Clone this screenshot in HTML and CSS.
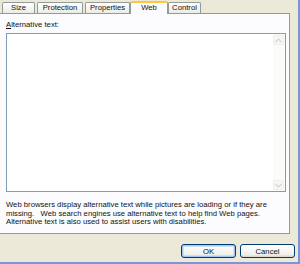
FILE: index.html
```html
<!DOCTYPE html>
<html>
<head>
<meta charset="utf-8">
<link rel="stylesheet" href="styles.css">
</head>
<body>
<div class="dialog">
  <div class="tabstrip">
    <div class="tab t-size">Size</div>
    <div class="tab t-prot">Protection</div>
    <div class="tab t-prop">Properties</div>
    <div class="tab active t-web">Web</div>
    <div class="tab t-ctrl">Control</div>
  </div>
  <div class="panel">
    <div class="label"><span class="acc">A</span>lternative text:</div>
    <div class="textbox">
      <div class="textarea-content"></div>
      <div class="scrollbar">
        <div class="sb-btn"><svg width="7" height="5" viewBox="0 0 7 5"><path d="M0.5 4 L3.5 1 L6.5 4" fill="none" stroke="#d2d5db" stroke-width="1.2"/></svg></div>
        <div class="sb-track"></div>
        <div class="sb-btn"><svg width="7" height="5" viewBox="0 0 7 5"><path d="M0.5 1 L3.5 4 L6.5 1" fill="none" stroke="#d2d5db" stroke-width="1.2"/></svg></div>
      </div>
    </div>
    <p class="help">Web browsers display alternative text while pictures are loading or if they are<br>missing.&nbsp;&nbsp; Web search engines use alternative text to help find Web pages.<br>Alternative text is also used to assist users with disabilities.</p>
  </div>
  <div class="footer">
    <div class="btn default">OK</div>
    <div class="btn">Cancel</div>
  </div>
</div>
</body>
</html>
```
FILE: styles.css
```css
html, body {
  margin: 0;
  padding: 0;
}
body {
  width: 300px;
  height: 264px;
  background: #ECE9D8;
  font-family: "Liberation Sans", Arial, sans-serif;
  font-size: 7.7px;
  color: #111;
  overflow: hidden;
}
.dialog {
  box-sizing: border-box;
  width: 300px;
  height: 264px;
  border-right: 2px solid #7a96d8;
  border-bottom: 2px solid #7a96d8;
  padding-top: 1px;
  display: flex;
  flex-direction: column;
}
.tabstrip {
  display: flex;
  align-items: flex-end;
  height: 12px;
  padding-left: 2px;
  gap: 2px;
  position: relative;
  z-index: 2;
}
.tab {
  box-sizing: border-box;
  height: 11px;
  border: 1px solid #919B9C;
  border-bottom: none;
  border-radius: 2px 2px 0 0;
  background: linear-gradient(#ffffff, #ECEBE6);
  display: flex;
  align-items: center;
  justify-content: center;
  white-space: nowrap;
  line-height: 1;
}
.t-size { width: 33px; }
.t-prot { width: 46px; }
.t-prop { width: 45px; }
.t-web { width: 38px; }
.t-ctrl { width: 33px; }
.tab.active {
  height: 13px;
  margin: 0 -2px -1px -2px;
  border-top: 2px solid #FFC83C;
  background: #FCFCFE;
  padding-bottom: 1px;
}
.panel {
  box-sizing: border-box;
  width: 290px;
  height: 221px;
  border: 1px solid #919B9C;
  border-left: none;
  background: #FCFCFE;
  padding: 5px 0 0 6px;
  display: flex;
  flex-direction: column;
}
.label {
  height: 14px;
  line-height: 12px;
}
.acc {
  text-decoration: underline;
}
.textbox {
  box-sizing: border-box;
  width: 280px;
  height: 159px;
  border: 1px solid #7F9DB9;
  background: #fff;
  display: flex;
}
.textarea-content {
  flex: 1;
}
.scrollbar {
  width: 11px;
  display: flex;
  flex-direction: column;
  background: #FBFBF9;
  padding: 1px 1px 1px 0;
}
.sb-btn {
  box-sizing: border-box;
  height: 10px;
  border: 1px solid #f0efe9;
  border-radius: 1px;
  background: #F7F6F2;
  display: flex;
  align-items: center;
  justify-content: center;
}
.sb-track {
  flex: 1;
}
.help {
  margin: 9px 0 0 0;
  line-height: 8.5px;
  white-space: nowrap;
}
.footer {
  display: flex;
  justify-content: flex-end;
  gap: 4px;
  padding: 10px 3px 0 0;
}
.btn {
  box-sizing: border-box;
  width: 55px;
  height: 14px;
  border: 1px solid #003C74;
  border-radius: 3px;
  background: linear-gradient(#ffffff, #F0F0EA 80%, #D6D0C5);
  display: flex;
  align-items: center;
  justify-content: center;
}
.btn.default {
  box-shadow: inset 0 0 0 1px #A6C4F3, inset 0 0 0 2px #CEE1FB;
}
```
